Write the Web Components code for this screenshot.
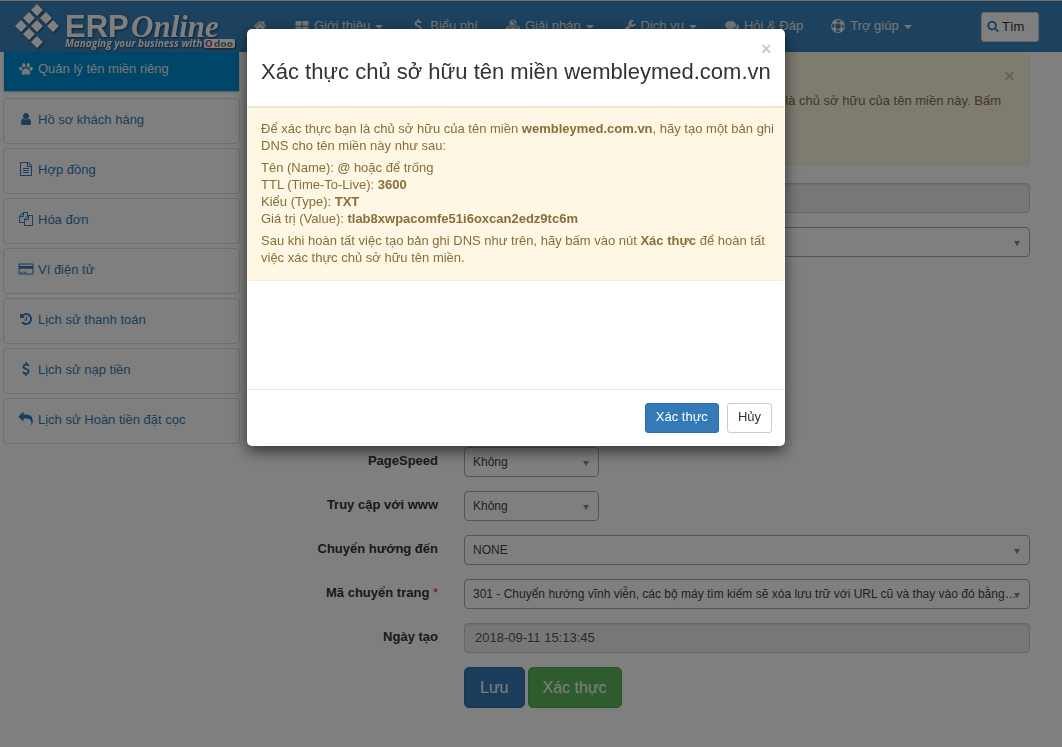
<!DOCTYPE html>
<html lang="vi">
<head>
<meta charset="utf-8">
<title>ERPOnline</title>
<style>
html { background: #fff; }
body { margin: 0; font: 13px/17px "Liberation Sans", Arial, sans-serif; color: #333; }
</style>
</head>
<body>
<erp-page></erp-page>
<script>
const define = (name, html, setup) => {
  const tpl = document.createElement('template');
  tpl.innerHTML = html;
  customElements.define(name, class extends HTMLElement {
    connectedCallback() {
      if (this.shadowRoot) return;
      this.attachShadow({ mode: 'open' }).append(tpl.content.cloneNode(true));
      if (setup) setup(this, this.shadowRoot);
    }
  });
};

const ICONS = {
  home: '<path d="M1472 992v480q0 26-19 45t-45 19h-384v-384h-256v384h-384q-26 0-45-19t-19-45v-480q0-1 .5-3t.5-3l575-474 575 474q1 2 1 6zm223-69l-62 74q-8 9-21 11h-3q-13 0-21-7l-692-577-692 577q-12 8-24 7-13-2-21-11l-62-74q-8-10-7-23.5t11-21.5l719-599q32-26 76-26t76 26l244 204v-195q0-14 9-23t23-9h192q14 0 23 9t9 23v408l219 182q10 8 11 21.5t-7 23.5z"/>',
  tiles: '<rect x="64" y="256" width="768" height="600" rx="110"/><rect x="960" y="256" width="768" height="600" rx="110"/><rect x="64" y="984" width="768" height="600" rx="110"/><rect x="960" y="984" width="768" height="600" rx="110"/>',
  dollar: '<path d="M1362 1185q0 153-99.500 263.500t-258.500 136.500v175q0 14-9 23t-23 9h-135q-13 0-22.500-9.500t-9.500-22.500v-175q-66-9-127.500-31t-101.500-44.500-74-48-46.500-37.500-17.500-18q-17-21-2-41l103-135q7-10 23-12 15-2 24 9l2 2q113 99 243 125 37 8 74 8 81 0 142.500-43t61.500-122q0-28-15-53t-33.500-42-58.500-37.500-66-32-80-32.500q-39-16-61.500-25t-61.500-26.500-62.500-31-56.500-35.500-53.500-42.500-43.500-49-35.500-58-21-66.500-8.500-78q0-138 98-242t255-134v-180q0-13 9.500-22.500t22.500-9.500h135q14 0 23 9t9 23v176q57 6 110.500 23t87 33.500 63.500 37.500 39 29 15 14q17 18 5 38l-81 146q-8 15-23 16-14 3-27-7-3-3-14.500-12t-39-26.500-58.500-32-74.500-26-85.500-11.500q-95 0-155 43t-60 111q0 26 8.500 48t29.500 41.500 39.500 33 56 31 60.500 27 70 27.500q53 20 81 31.500t76 35 75.500 42.500 62 50 53 63.500 31.500 76.500 13 94z"/>',
  cubes: '<g fill-rule="evenodd"><path d="M896 60l420 170v470l-420 200-420-200v-470zM896 190l-290 115 290 120 290-120zM965 540v230l250-115v-230z"/><path d="M450 830l430 175v480l-430 210-430-210v-480zM450 960l-290 115 290 120 290-120zM520 1310v230l250-115v-230z"/><path d="M1342 830l430 175v480l-430 210-430-210v-480zM1342 960l-290 115 290 120 290-120zM1412 1310v230l250-115v-230z"/></g>',
  wrench: '<path d="M448 1472q0-26-19-45t-45-19-45 19-19 45 19 45 45 19 45-19 19-45zm644-420l-682 682q-37 37-90 37-52 0-91-37l-106-108q-38-36-38-90 0-53 38-91l681-681q39 98 114.500 173.500t173.500 114.500zm634-435q0 39-23 106-47 134-164.500 217.500t-258.500 83.500q-185 0-316.500-131.500t-131.500-316.500 131.500-316.500 316.500-131.500q58 0 121.500 16.500t107.500 46.500q16 11 16 28t-16 28l-293 169v224l193 107q5-3 79-48.500t135.500-81 70.500-35.500q15 0 23.500 10t8.500 25z"/>',
  comments: '<path d="M1408 768q0 139-94 257t-256.500 186.500-353.500 68.500q-86 0-176-16-124 88-278 128-36 9-86 16h-3q-11 0-20.500-8t-11.500-21q-1-3-1-6.500t.5-6.500 2-6l2.500-5 3.500-5.500 4-5 4.500-5 4-4.500q5-6 23-25t26-29.500 22.500-29 25-38.500 20.500-44q-124-72-195-177t-71-224q0-139 94-257t256.500-186.500 353.500-68.500 353.500 68.500 256.500 186.500 94 257zm384 256q0 120-71 224.500t-195 176.500q10 24 20.500 44t25 38.500 22.500 29 26 29.500 23 25q1 1 4 4.500t4.500 5 4 5 3.500 5.500l2.500 5 2 6 .5 6.500-1 6.500q-3 14-13 22t-22 7q-50-7-86-16-154-40-278-128-90 16-176 16-271 0-472-132 58 4 88 4 161 0 309-45t264-129q125-92 192-212t67-254q0-77-23-152 129 71 204 178t75 230z"/>',
  ring: '<g fill="none" stroke="currentColor"><circle cx="896" cy="896" r="820" stroke-width="130"/><circle cx="896" cy="896" r="430" stroke-width="130"/><circle cx="896" cy="896" r="625" stroke-width="400" stroke-dasharray="491 491" stroke-dashoffset="-245"/></g>',
  search: '<path d="M1216 832q0-185-131.500-316.500t-316.500-131.500-316.500 131.500-131.500 316.500 131.500 316.500 316.500 131.500 316.500-131.500 131.500-316.500zm512 832q0 52-38 90t-90 38q-54 0-90-38l-343-342q-179 124-399 124-143 0-273.500-55.500t-225-150-150-225-55.500-273.500 55.500-273.500 150-225 225-150 273.500-55.500 273.500 55.500 225 150 150 225 55.500 273.500q0 220-124 399l343 343q37 37 37 90z"/>',
  paw: '<ellipse cx="610" cy="430" rx="210" ry="290" transform="rotate(-12 610 430)"/><ellipse cx="1182" cy="430" rx="210" ry="290" transform="rotate(12 1182 430)"/><ellipse cx="240" cy="870" rx="200" ry="260" transform="rotate(-25 240 870)"/><ellipse cx="1552" cy="870" rx="200" ry="260" transform="rotate(25 1552 870)"/><path d="M896 800c240 0 560 370 560 630 0 160-130 210-260 210-130 0-200-80-300-80s-170 80-300 80c-130 0-260-50-260-210 0-260 320-630 560-630z"/>',
  user: '<path d="M1536 1399q0 109-62.500 187t-150.500 78h-854q-88 0-150.500-78t-62.500-187q0-85 8.500-160.500t31.500-152 58.500-131 94-89 134.500-34.500q131 128 313 128t313-128q76 0 134.500 34.500t94 89 58.500 131 31.500 152 8.500 160.500zm-256-887q0 159-112.500 271.500t-271.500 112.500-271.500-112.500-112.500-271.500 112.500-271.500 271.500-112.500 271.500 112.500 112.500 271.500z"/>',
  file: '<path d="M1596 380q28 28 48 76t20 88v1152q0 40-28 68t-68 28h-1344q-40 0-68-28t-28-68v-1600q0-40 28-68t68-28h896q40 0 88 20t76 48zm-444-244v376h376q-10-29-22-41l-313-313q-12-12-41-22zm384 1528v-1024h-416q-40 0-68-28t-28-68v-416h-768v1536h1280zm-1024-864q0-14 9-23t23-9h704q14 0 23 9t9 23v64q0 14-9 23t-23 9h-704q-14 0-23-9t-9-23v-64zm736 224q14 0 23 9t9 23v64q0 14-9 23t-23 9h-704q-14 0-23-9t-9-23v-64q0-14 9-23t23-9h704zm0 256q14 0 23 9t9 23v64q0 14-9 23t-23 9h-704q-14 0-23-9t-9-23v-64q0-14 9-23t23-9h704z"/>',
  files: '<path d="M1696 384q40 0 68 28t28 68v1216q0 40-28 68t-68 28h-960q-40 0-68-28t-28-68v-288h-544q-40 0-68-28t-28-68v-672q0-40 20-88t48-76l408-408q28-28 76-48t88-20h416q40 0 68 28t28 68v328q68-40 128-40h416zm-544 213l-299 299h299v-299zm-640-384l-299 299h299v-299zm196 647l316-316v-416h-384v416q0 40-28 68t-68 28h-416v640h512v-256q0-40 20-88t48-76zm956 804v-1152h-384v416q0 40-28 68t-68 28h-416v640h896z"/>',
  card: '<path fill-rule="evenodd" d="M30 190h1732q90 0 90 90v1232q0 90-90 90h-1732q-90 0-90-90v-1232q0-90 90-90zM68 320v190h1656v-190zM68 850v620h1656v-620zM200 1240h230v120h-230zM550 1240h340v120h-340z"/>',
  history: '<path d="M1664 896q0 156-61 298t-164 245-245 164-298 61q-172 0-327-72.500t-264-204.500q-7-10-6.500-22.500t8.500-20.500l137-138q10-9 25-9 16 2 23 12 73 95 179 147t225 52q104 0 198.500-40.500t163.500-109.500 109.500-163.500 40.500-198.500-40.500-198.500-109.500-163.500-163.500-109.500-198.500-40.500q-98 0-188 35.500t-160 101.500l137 138q31 30 14 69-17 40-59 40h-448q-26 0-45-19t-19-45v-448q0-42 40-59 39-17 69 14l130 129q107-101 244.500-156.500t284.500-55.500q156 0 298 61t245 164 164 245 61 298zm-640-288v448q0 14-9 23t-23 9h-320q-14 0-23-9t-9-23v-64q0-14 9-23t23-9h224v-352q0-14 9-23t23-9h64q14 0 23 9t9 23z"/>',
  reply: '<path d="M1792 1120q0 166-127 451-3 7-10.500 24t-13.500 30-13 22q-12 17-28 17-15 0-23.500-10t-8.500-25q0-9 2.500-26.500t2.500-23.500q5-68 5-123 0-112-19.500-200.500t-54-153.500-89-112-117-76.500-144.500-45.500-163.500-21.500-182.500-6h-224v256q0 26-19 45t-45 19-45-19l-512-512q-19-19-19-45t19-45l512-512q19-19 45-19t45 19 19 45v256h224q713 0 875 403 53 134 53 333z"/>'
};

define('erp-icon', `
<style>
:host { display: block; flex: none; width: 14px; height: 14px; }
svg { display: block; width: 100%; height: 100%; overflow: visible; fill: currentColor; }
</style><svg viewBox="0 0 1792 1792" aria-hidden="true"></svg>`,
(el, root) => { root.querySelector('svg').innerHTML = ICONS[el.getAttribute('name')]; });

const prependIcon = (link, name) => {
  const icon = document.createElement('erp-icon');
  icon.setAttribute('name', name);
  link.prepend(icon);
};

define('erp-logo', `
<style>
:host { display: block; }
a, svg { display: block; }
svg { filter: drop-shadow(1px 1px 1px rgba(0,0,0,.5)); }
</style>
<a href="#" aria-label="ERPOnline">
<svg width="222" height="50" viewBox="0 0 222 50" fill="#fff">
  <path d="M22 3l6 6-6 6-6-6zM14 11l6 6-6 6-6-6zM31 11l6 6-6 6-6-6zM6 19l6 6-6 6-6-6zM22 19l6 6-6 6-6-6zM38 19l6 6-6 6-6-6zM14 27l6 6-6 6-6-6zM22 35l6 6-6 6-6-6z"/>
  <text x="50" y="36" font-family="Liberation Sans" font-weight="700" font-size="31">ERP</text>
  <text x="116" y="36" font-family="Liberation Serif" font-weight="700" font-style="italic" font-size="31">Online</text>
  <text x="50" y="46" font-family="Open Sans" font-weight="700" font-style="italic" font-size="10">Managing your business with</text>
  <rect x="189" y="38" width="31" height="9" rx="2"/>
  <g font-family="DejaVu Sans" font-weight="700" font-size="9"><text x="190" y="46" fill="#a3478c">O</text><text x="199" y="46" fill="#777">doo</text></g>
</svg></a>`);

define('nav-item', `
<style>
:host { display: block; }
a { display: flex; align-items: center; gap: 5px; color: #eee; text-decoration: none; white-space: nowrap; }
i { border: 4px solid transparent; border-top-color: currentColor; border-bottom: 0; margin-top: 2px; display: none; }
:host([menu]) i { display: block; }
</style>
<a href="#"><slot></slot><i></i></a>`,
(el, root) => {
  const link = root.querySelector('a');
  prependIcon(link, el.getAttribute('icon'));
  if (el.hasAttribute('label')) link.setAttribute('aria-label', el.getAttribute('label'));
});

define('erp-header', `
<style>
:host { display: flex; box-sizing: border-box; height: 52px; padding: 0 23px 0 15px; border-top: 1px solid #ddd; background: #3a85be; }
nav { display: flex; gap: 28px; margin-left: 16px; align-items: center; height: 49px; }
button { display: flex; align-items: center; gap: 3px; margin: 11px 0 0 auto; width: 58px; height: 30px; padding: 0 5px 2px; box-sizing: border-box;
  border: 1px solid #ccc; border-radius: 3px; background: #fff; color: #333; font: inherit; }
erp-icon { color: #337ab7; width: 12px; height: 12px; }
</style>
<erp-logo></erp-logo>
<nav>
  <nav-item icon="home" label="Trang chủ"></nav-item>
  <nav-item icon="tiles" menu>Giới thiệu</nav-item>
  <nav-item icon="dollar">Biểu phí</nav-item>
  <nav-item icon="cubes" menu>Giải pháp</nav-item>
  <nav-item icon="wrench" menu>Dịch vụ</nav-item>
  <nav-item icon="comments">Hỏi &amp; Đáp</nav-item>
  <nav-item icon="ring" menu>Trợ giúp</nav-item>
</nav>
<button type="button"><erp-icon name="search"></erp-icon>Tìm</button>`);

define('side-item', `
<style>
:host { display: block; }
a { display: flex; align-items: center; gap: 5px; box-sizing: border-box; height: 46px; padding: 0 15px 4px; border: 1px solid #ddd; border-radius: 4px;
  color: #337ab7; text-decoration: none; }
:host([active]) a { height: 39px; margin: 0 1px 3px; padding: 0 15px 6px; border: 0; border-radius: 0; background: #008cd0; color: #eee; box-shadow: 0 1px 2px rgba(0,0,0,.3); }
</style>
<a href="#"><slot></slot></a>`,
(el, root) => prependIcon(root.querySelector('a'), el.getAttribute('icon')));

define('side-menu', `
<style>
:host { display: block; }
nav { display: flex; flex-direction: column; gap: 4px; }
</style>
<nav>
  <side-item icon="paw" active>Quản lý tên miền riêng</side-item>
  <side-item icon="user">Hồ sơ khách hàng</side-item>
  <side-item icon="file">Hợp đồng</side-item>
  <side-item icon="files">Hóa đơn</side-item>
  <side-item icon="card">Ví điện tử</side-item>
  <side-item icon="history">Lịch sử thanh toán</side-item>
  <side-item icon="dollar">Lịch sử nạp tiền</side-item>
  <side-item icon="reply">Lịch sử Hoàn tiền đặt cọc</side-item>
</nav>`);

define('close-button', `
<style>
:host { display: block; }
button { display: block; width: 10px; padding: 0; border: 0; background: none; color: #000; opacity: .2; font: bold 18px/20px "Liberation Sans", sans-serif; text-align: center; }
</style>
<button type="button" aria-label="Đóng">×</button>`);

define('page-notice', `
<style>
:host { display: flex; flex-direction: column; align-items: flex-end; box-sizing: border-box; height: 113px; padding: 14px 15px;
  border: 1px solid #faebcc; border-top: 0; border-radius: 4px; background: #fcf8e3; color: #8a6d3b; }
p { margin: 6px 13px 0 0; text-align: right; }
</style>
<close-button></close-button>
<p><slot></slot></p>`);

const FIELD = `
:host { display: grid; grid-template-columns: 184px 1fr; column-gap: 26px; height: 30px; }
label { text-align: right; font-weight: 700; padding-top: 5px; }
label b { font-weight: 400; color: #c33; }
.box { display: grid; grid-column: 2; align-items: center; }
:host([short]) .box { width: 135px; }
select, input { grid-area: 1/1; box-sizing: border-box; width: 100%; height: 30px; margin: 0; border: 1px solid #aaa; border-radius: 4px; font: inherit; color: #444; background: #fff; }
select { appearance: none; padding: 0 8px; font-size: 12px; }
input { padding: 0 10px 2px; border-color: #ccc; background: #eee; color: #555; box-shadow: inset 0 1px 1px rgba(0,0,0,.08); }
i { grid-area: 1/1; justify-self: end; margin: 3px 10px 0 0; border: 3px solid transparent; border-top: 5px solid #888; border-bottom: 0; pointer-events: none; }`;
const setupField = (el, root) => {
  const label = root.querySelector('label'), c = root.querySelector('select, input');
  if (el.hasAttribute('label')) {
    label.textContent = el.getAttribute('label');
    if (el.hasAttribute('required')) { const b = document.createElement('b'); b.textContent = ' *'; label.append(b); }
  } else { label.remove(); c.setAttribute('aria-label', el.getAttribute('name')); }
  const value = el.getAttribute('value') || '';
  if (c.tagName === 'SELECT') c.add(new Option(value)); else c.value = value;
};
define('select-field', `<style>${FIELD}</style><label for="f"></label><span class="box"><select id="f"></select><i></i></span>`, setupField);
define('text-field', `<style>${FIELD}</style><label for="f"></label><span class="box"><input id="f" readonly></span>`, setupField);

define('domain-form', `
<style>
:host { display: block; }
form { display: flex; flex-direction: column; gap: 14px; margin-top: 18px; }
.rest { height: 162px; }
.actions { display: flex; gap: 3px; padding-left: 210px; }
button { height: 41px; padding: 0 15px; border: 1px solid #2e6da4; border-radius: 5px; background: #337ab7; color: #fff; font: 16px/24px "Liberation Sans", sans-serif; }
.ok { padding: 0 14px; background: #5cb85c; border-color: #4cae4c; }
</style>
<page-notice>là chủ sở hữu của tên miền này. Bấm</page-notice>
<form>
  <text-field name="Tên miền"></text-field>
  <select-field name="Kiểu"></select-field>
  <div class="rest"></div>
  <select-field short label="PageSpeed" value="Không"></select-field>
  <select-field short label="Truy cập với www" value="Không"></select-field>
  <select-field label="Chuyển hướng đến" value="NONE"></select-field>
  <select-field required label="Mã chuyển trang" value="301 - Chuyển hướng vĩnh viễn, các bộ máy tìm kiếm sẽ xóa lưu trữ với URL cũ và thay vào đó bằng…"></select-field>
  <text-field label="Ngày tạo" value="2018-09-11 15:13:45"></text-field>
  <div class="actions"><button type="button">Lưu</button><button type="button" class="ok">Xác thực</button></div>
</form>`);

define('verify-dialog', `
<style>
:host { position: fixed; inset: 0; display: flex; justify-content: center; align-items: flex-start; padding: 29px 30px 0 0; background: rgba(0,0,0,.5); }
section { width: 538px; max-width: 100%; border-radius: 5px; background: #fff; box-shadow: 0 5px 15px rgba(0,0,0,.6); }
header { display: flex; flex-direction: column; padding: 10px 14px 21px; border-bottom: 1px solid #e5e5e5; }
close-button { align-self: flex-end; }
h4 { margin: 0; font-size: 22px; line-height: 26px; font-weight: 400; color: #333; }
.body { min-height: 282px; }
.note { padding: 12px 8px 14px 14px; border: 1px solid #faebcc; border-width: 1px 0; border-radius: 4px; background: #fdf7e3; color: #8a6d3b; }
p { margin: 0 0 5px; }
p:last-child { margin: 0; }
footer { display: flex; justify-content: flex-end; gap: 8px; padding: 13px; border-top: 1px solid #e5e5e5; }
button { height: 30px; padding: 0 10px 3px; border: 1px solid #ccc; border-radius: 3px; background: #fff; color: #333; font: inherit; }
.primary { border-color: #2e6da4; background: #337ab7; color: #fff; }
</style>
<section role="dialog" aria-labelledby="t">
  <header><close-button></close-button><h4 id="t">Xác thực chủ sở hữu tên miền wembleymed.com.vn</h4></header>
  <div class="body"><div class="note">
    <p>Để xác thực bạn là chủ sở hữu của tên miền <b>wembleymed.com.vn</b>, hãy tạo một bản ghi<br>DNS cho tên miền này như sau:</p>
    <p>Tên (Name): <b>@</b> hoặc để trống<br>TTL (Time-To-Live): <b>3600</b><br>Kiểu (Type): <b>TXT</b><br>Giá trị (Value): <b>tlab8xwpacomfe51i6oxcan2edz9tc6m</b></p>
    <p>Sau khi hoàn tất việc tạo bản ghi DNS như trên, hãy bấm vào nút <b>Xác thực</b> để hoàn tất<br>việc xác thực chủ sở hữu tên miền.</p>
  </div></div>
  <footer><button type="button" class="primary">Xác thực</button><button type="button">Hủy</button></footer>
</section>`);

define('erp-page', `
<style>
:host { display: block; min-height: 100vh; }
main { display: grid; grid-template-columns: 237px 1fr; column-gap: 14px; padding: 0 32px 40px 3px; }
</style>
<erp-header></erp-header>
<main><side-menu></side-menu><domain-form></domain-form></main>
<verify-dialog></verify-dialog>`);
</script>
</body>
</html>
